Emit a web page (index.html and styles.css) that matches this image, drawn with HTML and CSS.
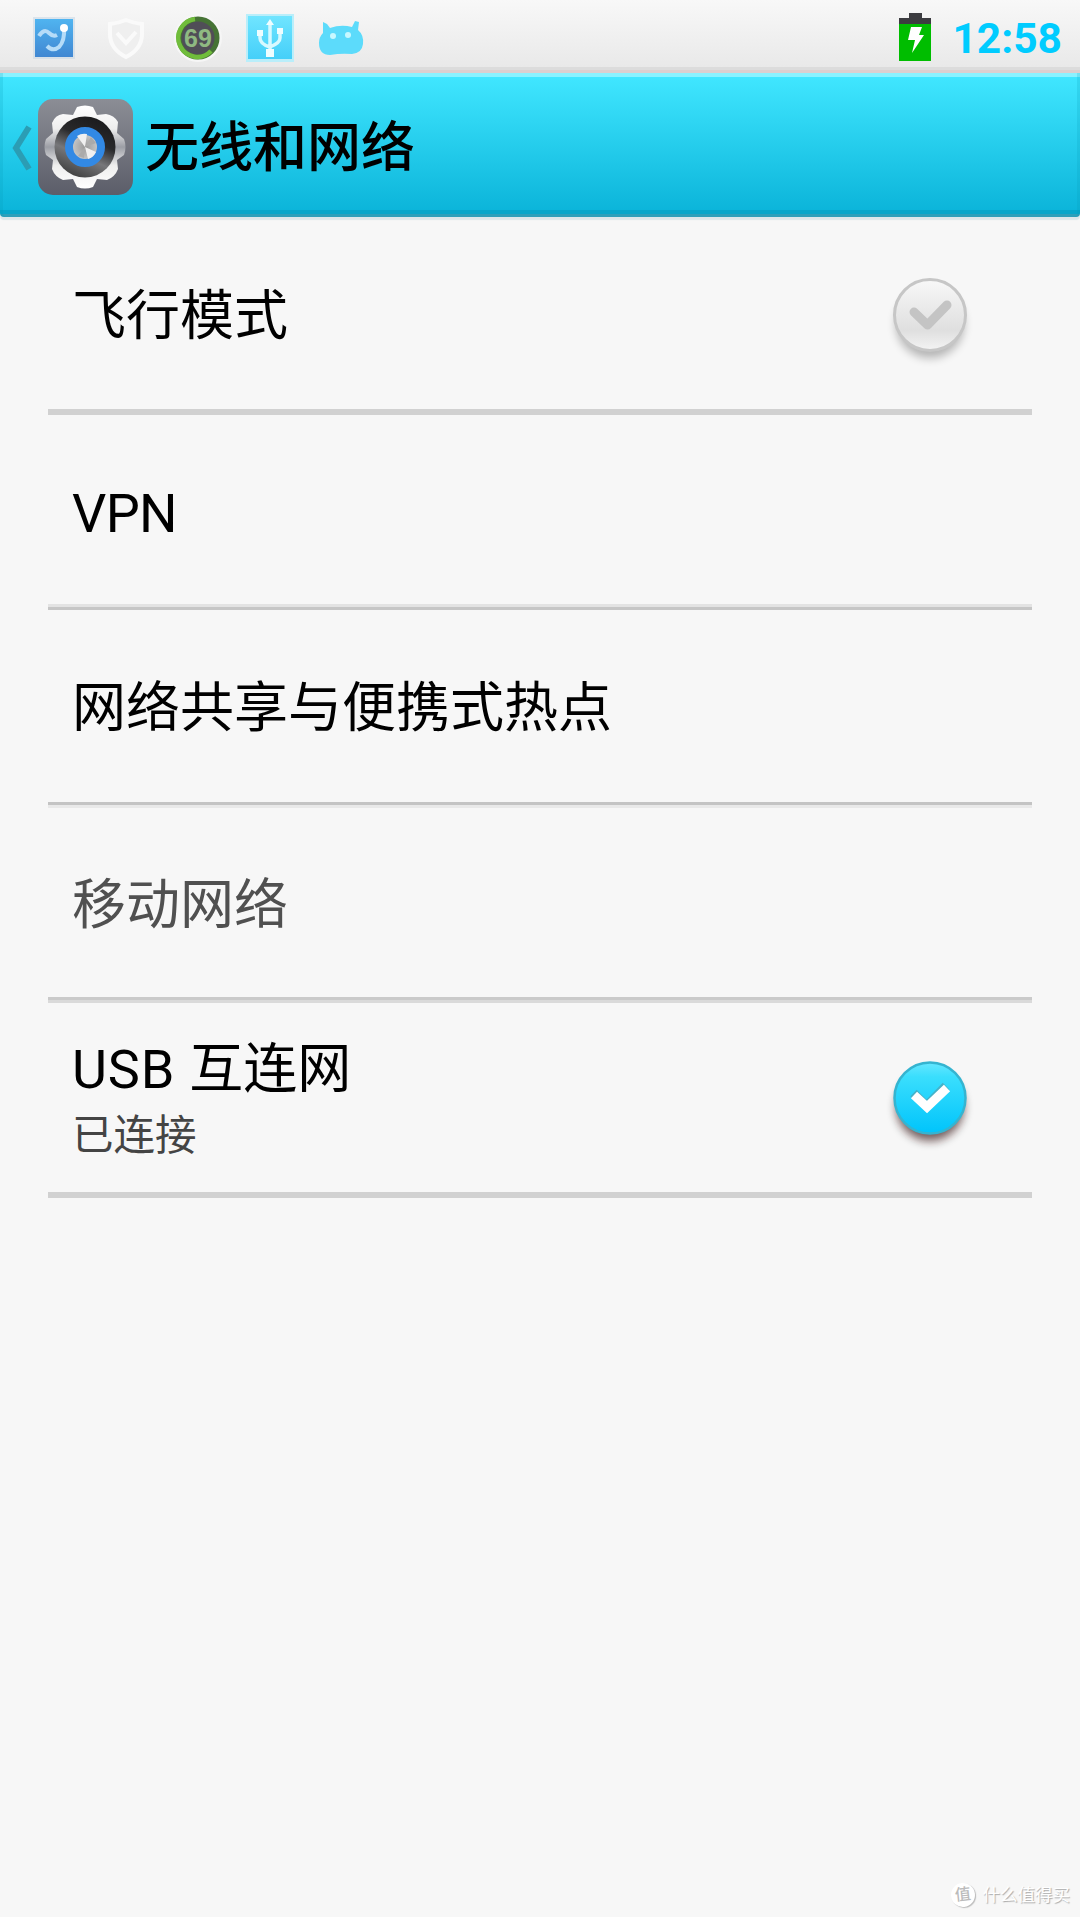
FILE: index.html
```html
<!DOCTYPE html>
<html lang="zh-CN">
<head>
<meta charset="utf-8">
<title>无线和网络</title>
<link rel="stylesheet" href="styles.css">
</head>
<body>
<div class="status-bar">
  <div class="notifications">
    <svg class="note" viewBox="0 0 48 48"><defs><linearGradient id="blue" x1="0" y1="0" x2="0" y2="1"><stop offset="0" stop-color="#50b4f0"/><stop offset="1" stop-color="#4087d2"/></linearGradient></defs><rect x="3" y="5" width="42" height="42" fill="#c9d8e6" opacity=".6"/><rect x="5" y="7" width="38" height="38" fill="url(#blue)"/><path d="M9 24q5-8 10-3q4 4 8 2M17 34q6 6 12 1q6-6 5-20" fill="none" stroke="#b5dcf8" stroke-width="4"/><circle cx="34" cy="16" r="4" fill="#fff"/></svg>
    <svg class="note" viewBox="0 0 48 48"><path d="M24 8q7 3 16 4v10q0 15-16 23Q8 37 8 22V12q9-1 16-4z" fill="#efefef" stroke="#fafafa" stroke-width="4"/><path d="M15 21l9 10 10-11" fill="none" stroke="#fafafa" stroke-width="4"/></svg>
    <svg class="note" viewBox="0 0 48 48"><circle cx="24" cy="26" r="24" fill="#f6f6f6"/><circle cx="24" cy="26" r="19" fill="#504e57" stroke="#467335" stroke-width="5"/><path d="M21 7A19 19 0 1 0 37 39" fill="none" stroke="#70bd3b" stroke-width="4.500"/><text x="24" y="35" class="note-count">69</text></svg>
    <svg class="note" viewBox="0 0 48 48"><defs><linearGradient id="cyan" x1="0" y1="0" x2="0" y2="1"><stop offset="0" stop-color="#70e5ff"/><stop offset="1" stop-color="#45cff9"/></linearGradient></defs><rect x="0" y="2" width="48" height="48" fill="#b9eefa"/><rect x="2" y="4" width="44" height="43" fill="url(#cyan)"/><path d="M24 12v32M14 21v5q0 6 10 9q10-4 10-9v-7" fill="none" stroke="#d8f9ff" stroke-width="3.500"/><path d="M24 7l4 6h-8zM20 37h8v8h-8zM11 18h6v6h-6zM31 16h6v6h-6z" fill="#effdff"/></svg>
    <svg class="note" viewBox="0 0 48 48"><path d="M5 10l4 2 3 4q11-4 22-1l3-6 4 1-1 8q6 5 5 14-1 9-11 10-11-1-22 1Q1 43 1 31q0-6 4-10z" fill="#5cdbfb"/><circle cx="15" cy="24" r="3" fill="#c8f8ff"/><circle cx="30" cy="23" r="3" fill="#c8f8ff"/></svg>
  </div>
  <div class="status-right">
    <svg class="battery" viewBox="0 0 34 50"><path d="M11 1h13v5h9v8H1V6h10z" fill="#3c3c40"/><path d="M1 12h32v37H1z" fill="#00bd00"/><path d="M13 15h11l-3 8h5L14 41l3-13h-7z" fill="#fff"/></svg>
    <span class="clock">12:58</span>
  </div>
</div>
<header class="title-bar">
  <svg class="back" viewBox="0 0 20 46"><path d="M17 2L4 23l13 21" fill="none" stroke="#2b9db4" stroke-width="6"/></svg>
  <svg class="settings" viewBox="0 0 96 96">
    <defs>
      <linearGradient id="plate" x1="0" y1="0" x2="0" y2="1"><stop offset="0" stop-color="#8b8d95"/><stop offset="1" stop-color="#5b5d69"/></linearGradient>
      <linearGradient id="teeth" x1="0" y1="0" x2="0" y2="1"><stop offset="0" stop-color="#fff"/><stop offset=".28" stop-color="#eee"/><stop offset=".5" stop-color="#9c9ea5"/><stop offset=".72" stop-color="#eee"/><stop offset="1" stop-color="#fff"/></linearGradient>
      <linearGradient id="ring" x1=".8" y1=".1" x2=".4" y2="1"><stop offset="0" stop-color="#1c1c1e"/><stop offset=".35" stop-color="#29292b"/><stop offset=".65" stop-color="#77777a"/><stop offset="1" stop-color="#444"/></linearGradient>
      <radialGradient id="hub"><stop offset="0" stop-color="#999"/><stop offset="1" stop-color="#d2d2d2"/></radialGradient>
    </defs>
    <rect x="0" y="0" width="95" height="96" rx="15" fill="url(#plate)"/>
    <path d="M39 8Q47 5 55 8L59 16L68 15Q76 16 80 23L79 34L86 40Q89 48 86 56L79 61L80 70Q77 78 69 81L59 80L55 88Q47 91 39 88L35 80L25 81Q17 78 14 70L15 61L8 56Q5 48 8 40L15 34L14 24Q17 16 25 15L35 16Z" fill="url(#teeth)"/>
    <circle cx="47" cy="48" r="30.500" fill="url(#ring)"/>
    <circle cx="47" cy="48" r="16" fill="url(#hub)" stroke="#3289e4" stroke-width="8"/>
    <path d="M47 48L39 37A13 13 0 0 1 49 35ZM47 48L58 53A12 12 0 0 1 50 60Z" fill="#f0f0f0"/>
    <path d="M47 48L53 38L58 44ZM47 48L40 57L46 59Z" fill="#aaa"/>
  </svg>
  <h1 class="title">无线和网络</h1>
</header>
<main class="list">
  <div class="row">
    <div class="label">飞行模式</div>
    <svg class="check" viewBox="0 0 90 100"><defs><linearGradient id="off" x1="0" y1="0" x2="0" y2="1"><stop offset="0" stop-color="#f8f8f8"/><stop offset=".72" stop-color="#dfdfdf"/><stop offset="1" stop-color="#f4f4f4"/></linearGradient><filter id="soft" x="-30%" y="-30%" width="160%" height="160%"><feGaussianBlur stdDeviation="5"/></filter></defs><circle cx="45" cy="51" r="34" fill="#000" opacity=".27" filter="url(#soft)"/><circle cx="45" cy="42" r="35.500" fill="url(#off)" stroke="#c6c6c6" stroke-width="3"/><path d="M29 39l13.500 13L62 32" class="tick tick-off"/></svg>
  </div>
  <div class="row line-low"><div class="label latin">VPN</div></div>
  <div class="row line-high"><div class="label">网络共享与便携式热点</div></div>
  <div class="row line-even"><div class="label disabled">移动网络</div></div>
  <div class="row short">
    <div class="text">
      <div class="label"><span class="wide">USB </span>互连网</div>
      <div class="summary">已连接</div>
    </div>
    <svg class="check check-on" viewBox="0 0 90 100"><defs><linearGradient id="on" x1="0" y1="0" x2="0" y2="1"><stop offset="0" stop-color="#66e7ff"/><stop offset=".2" stop-color="#3adefd"/><stop offset="1" stop-color="#00c4fb"/></linearGradient></defs><circle cx="45" cy="51" r="34" fill="#200" opacity=".62" filter="url(#soft)"/><circle cx="45" cy="42" r="35.500" fill="url(#on)" stroke="#35b4d0" stroke-width="2.500"/><path d="M28.500 37l13 13L61 30" class="tick tick-shade"/><path d="M29 39l13 12L62 32" class="tick tick-on"/></svg>
  </div>
</main>
<footer class="watermark"><span class="badge">值</span><span>什么值得买</span></footer>
</body>
</html>
```
FILE: styles.css
```css
* { box-sizing: border-box; }
body {
  margin: 0;
  width: 1080px;
  height: 1917px;
  display: flex;
  flex-direction: column;
  overflow: hidden;
  background: #f7f7f7;
  color: #000;
  font-family: Roboto, "Noto Sans CJK SC", sans-serif;
}
.status-bar {
  height: 73px;
  flex: none;
  display: flex;
  justify-content: space-between;
  padding: 10px 18px 0 30px;
  background: linear-gradient(#f8f8f8 0, #e9e9e9 67px, #dcdcdc 67px, #dcdcdc 70px, #dccfcf 70px);
}
.notifications { display: flex; gap: 24px; }
.note { width: 48px; height: 52px; overflow: visible; }
.note-count { font: 700 25px "Liberation Sans", sans-serif; fill: #8fb982; text-anchor: middle; }
.status-right { display: flex; }
.battery { width: 34px; height: 50px; margin-top: 2px; }
.clock {
  margin-left: 20px;
  font-size: 42.500px;
  font-weight: 700;
  line-height: 58px;
  color: #0cf;
}
.title-bar {
  height: 144px;
  flex: none;
  display: flex;
  align-items: center;
  padding: 3px 0 0 12px;
  border-radius: 0 0 4px 4px;
  background: linear-gradient(#8af2ff 0, #8af2ff 4px, #40e6ff 4px, #0cb5da 137px, #06a6ca 137px, #06a6ca 141px, #2c9fba 141px);
  box-shadow: 0 3px 1px #dbe7ea, inset 3px 0 #0793b32e, inset -3px 0 #0793b32e;
}
.back { width: 20px; height: 46px; margin-top: 2px; }
.settings { width: 96px; height: 96px; margin-left: 6px; }
.title { margin: 5px 0 0 11px; font-size: 54px; font-weight: 500; line-height: 80px; }
.list { margin: 2px 48px 0; }
.row {
  height: 196px;
  display: flex;
  align-items: center;
  justify-content: space-between;
  padding: 6px 57px 0 24px;
  border-bottom: 6px solid #d1d1d1;
}
.line-low { height: 195px; border-bottom: 3px solid #c6c6c6; box-shadow: inset 0 -3px #e3e3e3; }
.line-high { height: 195px; margin-bottom: 3px; border-bottom: 3px solid #c4c4c4; box-shadow: 0 3px #e9e9e9; }
.line-even { height: 192px; margin-bottom: 3px; border-bottom: 3px solid #cacaca; box-shadow: 0 3px #dadada; }
.short { height: 195px; }
.label { font-size: 54px; line-height: 70px; }
.latin { letter-spacing: -0.700px; }
.wide { letter-spacing: 0.800px; }
.disabled { color: #505050; }
.summary { font-size: 41.500px; line-height: 62px; color: #444; }
.check { width: 90px; height: 100px; margin-top: 11px; overflow: visible; }
.tick { fill: none; stroke-width: 9; stroke-linecap: round; stroke-linejoin: round; }
.tick-off { stroke: #c4c4c4; }
.tick-on { stroke: #fff; stroke-linecap: butt; stroke-linejoin: miter; }
.tick-shade { stroke: #46b2c8; stroke-linecap: butt; }
.watermark {
  margin-top: auto;
  padding: 0 10px 9px 0;
  display: flex;
  align-items: center;
  justify-content: flex-end;
  gap: 8px;
  font-size: 17.500px;
  line-height: 26px;
  color: #fff;
  text-shadow: 1px 1px 1px #aaa;
}
.badge {
  width: 24px;
  height: 24px;
  border-radius: 50%;
  background: #fff;
  box-shadow: 1px 1px 1px #bbb;
  color: #bbb;
  font-size: 16px;
  font-weight: 500;
  line-height: 23px;
  text-align: center;
  text-shadow: none;
  transform: rotate(-6deg);
}
```
